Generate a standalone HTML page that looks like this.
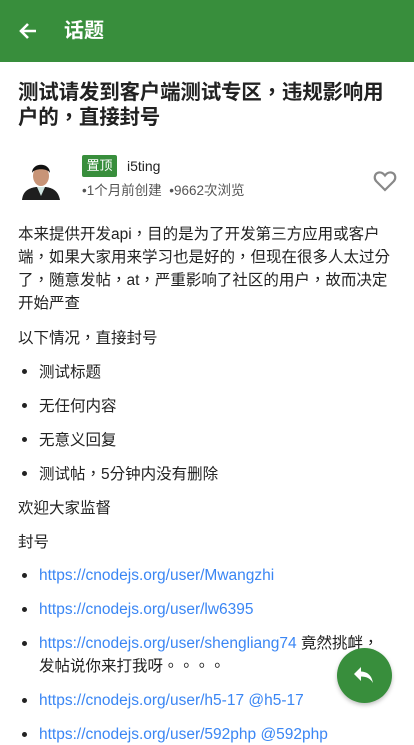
<!DOCTYPE html>
<html><head><meta charset="utf-8"><style>
*{margin:0;padding:0;box-sizing:border-box}
body{width:414px;height:736px;overflow:hidden;background:#fff;font-family:"Liberation Sans","Noto Sans CJK TC",sans-serif;color:#222;position:relative}
.hd{position:absolute;left:0;top:0;width:414px;height:62px;background:#388e3c}
.hd span{position:absolute;left:64px;top:17px;font-size:20px;color:#fff;font-weight:bold;line-height:28px}
.t{position:absolute;left:18px;top:80px;white-space:nowrap;font-size:20.5px;letter-spacing:-0.2px;font-weight:bold;line-height:25px;color:#222}
.a{position:absolute;white-space:nowrap;font-size:15.5px;line-height:20px}
.dot{position:absolute;left:22px;width:5px;height:5px;border-radius:50%;background:#222}
.l{color:#3a86f4}
</style></head><body>
<div class="hd">
<svg style="position:absolute;left:18px;top:21px" width="20" height="20" viewBox="0 0 20 20"><path d="M18 10H4M10 3L3 10l7 7" stroke="#fff" stroke-width="2.6" fill="none"/></svg>
<span>话题</span></div>
<div class="t">测试请发到客户端测试专区，违规影响用<br>户的，直接封号</div>
<svg style="position:absolute;left:20px;top:156px" width="42" height="44" viewBox="0 0 42 44">
<path d="M2 44 C3 34 10 32 16 31 L26 31 C32 32 38 34 40 44Z" fill="#1e1e1e"/>
<path d="M17 31 L21 40 L25 31Z" fill="#cfe4e0"/>
<ellipse cx="21" cy="20" rx="8" ry="10" fill="#c89477"/>
<path d="M12 17 C12 6 30 6 30 17 C28 12 14 12 12 17Z" fill="#111"/>
</svg>
<div style="position:absolute;left:82px;top:155px;width:35px;height:22px;background:#388e3c;border-radius:2px;color:#fff;font-size:13px;line-height:22px;text-align:center">置顶</div>
<div class="a" style="left:127px;top:156px;font-size:14px">i5ting</div>
<div class="a" style="left:82px;top:181px;font-size:13.5px;color:#555">•1个月前创建 &nbsp;•9662次浏览</div>
<svg style="position:absolute;left:373px;top:170px" width="24" height="22" viewBox="0 0 24 22"><path d="M12 20 L3.5 11.5 C0.5 8.5 1.5 3 6 2.5 C8.5 2.2 10.5 3.5 12 5.5 C13.5 3.5 15.5 2.2 18 2.5 C22.5 3 23.5 8.5 20.5 11.5Z" stroke="#888" stroke-width="2.2" fill="none"/></svg>
<div class="a" style="left:18px;top:225px">本来提供开发api，目的是为了开发第三方应用或客户</div>
<div class="a" style="left:18px;top:248px">端，如果大家用来学习也是好的，但现在很多人太过分</div>
<div class="a" style="left:18px;top:271px">了，随意发帖，at，严重影响了社区的用户，故而决定</div>
<div class="a" style="left:18px;top:294px">开始严查</div>
<div class="a" style="left:18px;top:329px">以下情况，直接封号</div>
<div class="dot" style="top:369px"></div><div class="a" style="left:39px;top:363px">测试标题</div>
<div class="dot" style="top:403px"></div><div class="a" style="left:39px;top:397px">无任何内容</div>
<div class="dot" style="top:437px"></div><div class="a" style="left:39px;top:431px">无意义回复</div>
<div class="dot" style="top:471px"></div><div class="a" style="left:39px;top:465px">测试帖，5分钟内没有删除</div>
<div class="a" style="left:18px;top:499px">欢迎大家监督</div>
<div class="a" style="left:18px;top:533px">封号</div>
<div class="dot" style="top:573px"></div><div class="a l" style="left:39px;top:566px">https://cnodejs.org/user/Mwangzhi</div>
<div class="dot" style="top:607px"></div><div class="a l" style="left:39px;top:600px">https://cnodejs.org/user/lw6395</div>
<div class="dot" style="top:641px"></div><div class="a" style="left:39px;top:634px"><span class="l">https://cnodejs.org/user/shengliang74</span> 竟然挑衅，</div>
<div class="a" style="left:39px;top:657px">发帖说你来打我呀。。。。</div>
<div class="dot" style="top:698px"></div><div class="a l" style="left:39px;top:691px">https://cnodejs.org/user/h5-17 @h5-17</div>
<div class="dot" style="top:732px"></div><div class="a l" style="left:39px;top:725px">https://cnodejs.org/user/592php @592php</div>
<div style="position:absolute;left:337px;top:648px;width:55px;height:55px;border-radius:50%;background:#388e3c;box-shadow:0 2px 4px rgba(0,0,0,.25)"></div>
<svg style="position:absolute;left:353px;top:665px" width="22" height="20" viewBox="0 0 22 20"><path d="M8 2 L1 9 L8 16 V11.5 C13 11.5 17 13 20 18 C19 12 16 7 8 6.5Z" fill="#fff"/></svg>
</body></html>
